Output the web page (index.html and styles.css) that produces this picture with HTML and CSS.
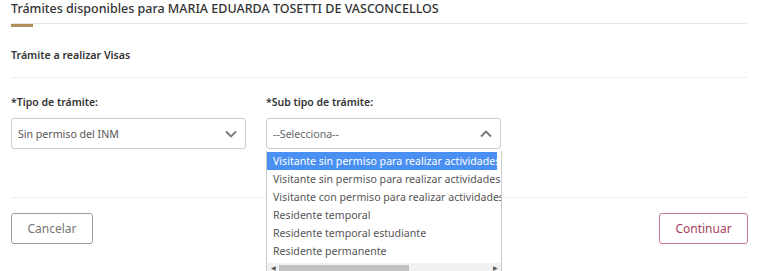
FILE: index.html
```html
<!DOCTYPE html>
<html lang="es">

<head>
    <meta charset="utf-8" />
    <title>Trámites</title>
    <link rel="stylesheet" href="styles.css">
</head>

<body>

    <div class="page">
        <h2 class="title">Trámites disponibles para MARIA EDUARDA TOSETTI DE VASCONCELLOS</h2>

        <div class="section">Trámite a realizar Visas</div>

        <div class="fields">
            <div class="field">
                <label>*Tipo de trámite:</label>
                <div class="select">
                    <span>Sin permiso del INM</span>
                    <svg width="12" height="8" viewBox="0 0 12 8"><path d="M1 1.5 6 6.5 11 1.5" fill="none" stroke="#777" stroke-width="1.8"/></svg>
                </div>
            </div>

            <div class="field">
                <label>*Sub tipo de trámite:</label>
                <div class="select open">
                    <span class="placeholder">--Selecciona--</span>
                    <svg width="12" height="8" viewBox="0 0 12 8"><path d="M1 6.5 6 1.5 11 6.5" fill="none" stroke="#777" stroke-width="1.8"/></svg>
                </div>
                <div class="listbox">
                    <div class="options">
                        <div class="option active">Visitante sin permiso para realizar actividades remuneradas</div>
                        <div class="option">Visitante sin permiso para realizar actividades remuneradas</div>
                        <div class="option">Visitante con permiso para realizar actividades remuneradas</div>
                        <div class="option">Residente temporal</div>
                        <div class="option">Residente temporal estudiante</div>
                        <div class="option">Residente permanente</div>
                    </div>
                    <div class="hscroll">
                        <span class="arrow">&#9664;</span>
                        <span class="thumb"></span>
                        <span class="arrow right">&#9654;</span>
                    </div>
                </div>
            </div>
        </div>

        <div class="actions">
            <button type="button" class="btn">Cancelar</button>
            <button type="button" class="btn primary">Continuar</button>
        </div>
    </div>

</body>

</html>
```

FILE: styles.css
```css
* {
    box-sizing: border-box;
    font-family: "Noto Sans", "Open Sans", sans-serif;
}

body {
    margin: 0;
    background: #fff;
    color: #333;
}

.page {
    width: 736px;
    margin-left: 11px;
    padding-bottom: 40px;
}

.title {
    margin: 0;
    height: 24px;
    padding-top: 0;
    font-size: 12.5px;
    font-weight: 500;
    line-height: 17px;
    color: #333;
    border-bottom: 1px solid #e6e6e6;
    position: relative;
}

.title::after {
    content: "";
    position: absolute;
    left: 0;
    bottom: -4px;
    width: 22px;
    height: 3px;
    background: #b38e5d;
}

.section {
    height: 54px;
    padding-top: 24px;
    font-size: 10.6px;
    font-weight: 600;
    border-bottom: 1px solid #eee;
}

.fields {
    display: flex;
    gap: 20px;
    height: 120px;
    padding-top: 16px;
    border-bottom: 1px solid #eee;
}

.field {
    width: 235px;
    position: relative;
}

label {
    display: block;
    font-size: 10.5px;
    font-weight: 600;
    height: 24px;
    padding-top: 1px;
}

.select {
    height: 31px;
    border: 1px solid #ccc;
    border-radius: 3px;
    display: flex;
    align-items: center;
    justify-content: space-between;
    padding: 0 8px 0 6px;
    font-size: 10.6px;
    color: #555;
}

.placeholder {
    color: #666;
}

.listbox {
    position: absolute;
    top: 57px;
    left: 0;
    width: 236px;
    height: 130px;
    border: 1px solid #ccc;
    border-top: none;
    background: #fff;
    overflow: hidden;
    z-index: 2;
}

.options {
    padding-top: 1px;
}

.option {
    height: 18px;
    line-height: 18px;
    font-size: 10.6px;
    color: #555;
    white-space: nowrap;
    padding-left: 6px;
    width: 234px;
    overflow: hidden;
}

.option.active {
    background: #4a90f2;
    color: #fff;
    width: 230px;
}

.hscroll {
    margin-top: 3px;
    height: 10px;
    background: #f1f1f1;
    display: flex;
    align-items: center;
    font-size: 6px;
    color: #555;
}

.arrow {
    width: 12px;
    text-align: center;
}

.arrow.right {
    margin-left: auto;
}

.thumb {
    width: 130px;
    height: 7px;
    background: #c1c1c1;
}

.actions {
    display: flex;
    justify-content: space-between;
    padding-top: 15px;
}

.btn {
    height: 31px;
    width: 82px;
    padding: 0;
    background: #fff;
    border: 1px solid #999;
    border-radius: 3px;
    font-size: 12px;
    color: #777;
}

.btn.primary {
    width: 89px;
    border-color: #c97a94;
    color: #a3405e;
    margin-right: -1px;
}
```
